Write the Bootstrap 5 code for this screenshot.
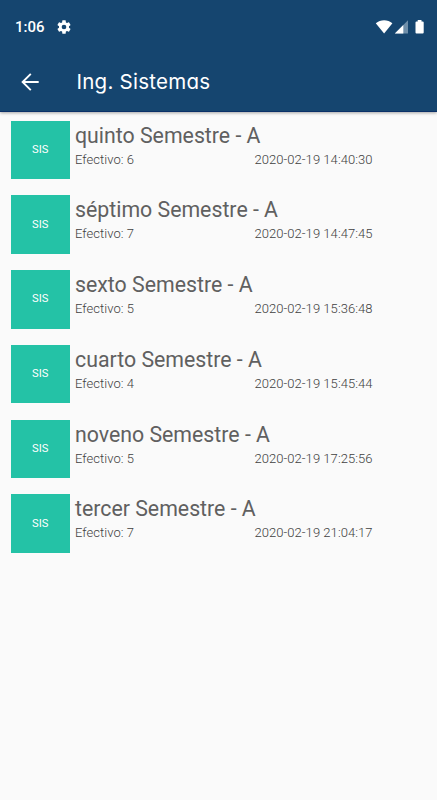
<!DOCTYPE html>
<html lang="es">
<head>
<meta charset="utf-8">
<meta name="viewport" content="width=device-width, initial-scale=1">
<title>Ing. Sistemas</title>
<link href="https://cdn.jsdelivr.net/npm/bootstrap@5.3.0/dist/css/bootstrap.min.css" rel="stylesheet">
<style>
body{font-family:Roboto,sans-serif;background:#fafafa;color:#606060;min-height:100vh;overflow:hidden}
.app-header{background:#15456f;height:112px;border-bottom:1px solid #0a3068;box-shadow:0 1px 3px rgba(0,0,0,.35)}
.status-bar{height:53px;padding:0 12px 0 15px}
.clock{font-size:15px;font-weight:500;line-height:20px;width:41px}
.tool-bar{height:58px;padding-left:18px}
.screen-title{font:400 20.5px/28px Inter,sans-serif;font-feature-settings:"cv11";letter-spacing:.25px;margin-left:34.5px;white-space:nowrap}
.groups{padding:8.5px 0 0 11px}
.group-item{height:74.8px}
.tile{width:58.5px;height:58.5px;background:#24c2a6;font-size:11.2px;color:#fff;padding-top:1px}
.group-text{padding-left:5.5px}
.group-name{font-size:21.3px;line-height:29px;white-space:nowrap}
.group-meta{font-size:13px;line-height:19px;white-space:nowrap;font-weight:300;color:#404040;letter-spacing:.05px}
.count{width:179.5px}
</style>
<script src="https://cdn.jsdelivr.net/npm/bootstrap@5.3.0/dist/js/bootstrap.bundle.min.js"></script>
</head>
<body>
<header class="app-header text-white">
  <div class="status-bar d-flex align-items-center">
    <span class="clock">1:06</span>
    <svg width="16" height="16" viewBox="0 0 24 24" fill="#fff" aria-hidden="true"><path d="M19.43 12.98c.04-.32.07-.64.07-.98s-.03-.66-.07-.98l2.11-1.65a.5.5 0 0 0 .12-.64l-2-3.46a.5.5 0 0 0-.61-.22l-2.49 1a7.3 7.3 0 0 0-1.69-.98l-.38-2.65A.49.49 0 0 0 14 2h-4a.49.49 0 0 0-.49.42l-.38 2.65c-.61.25-1.17.59-1.69.98l-2.49-1a.5.5 0 0 0-.61.22l-2 3.46a.5.5 0 0 0 .12.64l2.11 1.65a8 8 0 0 0 0 1.96l-2.11 1.65a.5.5 0 0 0-.12.64l2 3.46c.12.22.39.3.61.22l2.49-1c.52.4 1.08.73 1.69.98l.38 2.65c.03.24.24.42.49.42h4c.25 0 .46-.18.49-.42l.38-2.65a7.7 7.7 0 0 0 1.69-.98l2.49 1c.23.09.49 0 .61-.22l2-3.46a.5.5 0 0 0-.12-.64zM12 15.5a3.5 3.5 0 1 1 0-7 3.5 3.5 0 0 1 0 7z"/></svg>
    <svg class="ms-auto" width="50" height="16" viewBox="0 0 50 16" aria-hidden="true">
      <path d="M.8 4.3C5.5.2 12.7.2 17.4 4.3L9.1 14.5z" fill="#fff"/>
      <path d="M33 1.3V14.5H19.8z" fill="#6f8faa"/>
      <path d="M28.3 6V14.5H19.8z" fill="#fff"/>
      <path d="M42.7 1h3.8v1.5h1.2q1 0 1 1v10q0 1-1 1h-6.2q-1 0-1-1v-10q0-1 1-1h1.2z" fill="#fff"/>
    </svg>
  </div>
  <div class="tool-bar d-flex align-items-center">
    <svg width="24" height="24" viewBox="0 0 24 24" fill="none" stroke="#fff" stroke-width="1.9" aria-hidden="true"><path d="M20.7 12H4.5M12.8 3.8 4.6 12l8.2 8.2"/></svg>
    <h1 class="screen-title mb-0">Ing. Sistemas</h1>
  </div>
</header>
<main class="groups">
  <div class="group-item d-flex"><div class="tile d-flex align-items-center justify-content-center">SIS</div><div class="group-text"><div class="group-name">quinto Semestre - A</div><div class="group-meta d-flex"><span class="count">Efectivo: 6</span><span>2020-02-19 14:40:30</span></div></div></div>
  <div class="group-item d-flex"><div class="tile d-flex align-items-center justify-content-center">SIS</div><div class="group-text"><div class="group-name">séptimo Semestre - A</div><div class="group-meta d-flex"><span class="count">Efectivo: 7</span><span>2020-02-19 14:47:45</span></div></div></div>
  <div class="group-item d-flex"><div class="tile d-flex align-items-center justify-content-center">SIS</div><div class="group-text"><div class="group-name">sexto Semestre - A</div><div class="group-meta d-flex"><span class="count">Efectivo: 5</span><span>2020-02-19 15:36:48</span></div></div></div>
  <div class="group-item d-flex"><div class="tile d-flex align-items-center justify-content-center">SIS</div><div class="group-text"><div class="group-name">cuarto Semestre - A</div><div class="group-meta d-flex"><span class="count">Efectivo: 4</span><span>2020-02-19 15:45:44</span></div></div></div>
  <div class="group-item d-flex"><div class="tile d-flex align-items-center justify-content-center">SIS</div><div class="group-text"><div class="group-name">noveno Semestre - A</div><div class="group-meta d-flex"><span class="count">Efectivo: 5</span><span>2020-02-19 17:25:56</span></div></div></div>
  <div class="group-item d-flex"><div class="tile d-flex align-items-center justify-content-center">SIS</div><div class="group-text"><div class="group-name">tercer Semestre - A</div><div class="group-meta d-flex"><span class="count">Efectivo: 7</span><span>2020-02-19 21:04:17</span></div></div></div>
</main>
</body>
</html>
